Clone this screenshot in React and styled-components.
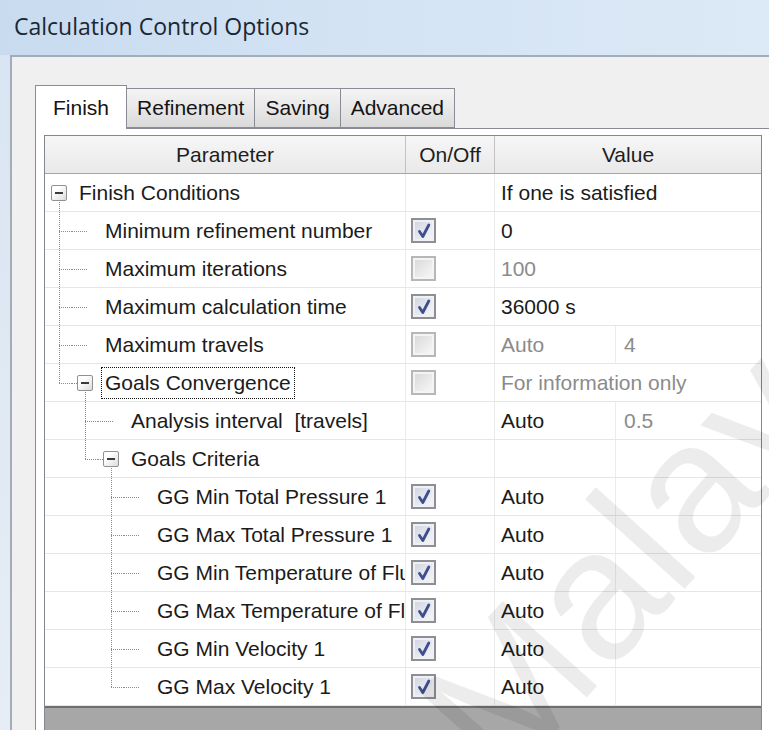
import React from 'react'
import styled, { createGlobalStyle } from 'styled-components'

const GlobalStyle = createGlobalStyle`
  html, body {
    margin: 0;
    padding: 0;
  }
  body {
    width: 769px;
    height: 730px;
    overflow: hidden;
    background: #f0f0f0;
    font-family: "Liberation Sans", Arial, sans-serif;
  }
`

const Window = styled.div`
  position: relative;
  width: 769px;
  height: 730px;
  display: flex;
  flex-direction: column;
  overflow: hidden;
`

const TitleBar = styled.div`
  height: 55px;
  flex: none;
  display: flex;
  align-items: center;
  padding-left: 14px;
  padding-bottom: 3px;
  box-sizing: border-box;
  background: linear-gradient(90deg, #c8dbef 0%, #d3e3f4 45%, #dce9f6 100%);
  font-family: "Open Sans", "Noto Sans", sans-serif;
  font-size: 23px;
  color: #1c2634;
`

const Frame = styled.div`
  flex: 1;
  display: flex;
  padding-left: 10px;
  background: linear-gradient(180deg, #d9e5f2, #e6edf5);
  min-height: 0;
`

const Client = styled.div`
  flex: 1;
  min-width: 0;
  border-top: 2px solid #a3adb9;
  border-left: 2px solid #a3adb9;
  background: #f0f0f0;
  padding: 28px 0 0 23px;
`

const TabStrip = styled.div`
  display: flex;
  align-items: flex-end;
  height: 43px;
  position: relative;
  z-index: 1;
`

const Tab = styled.div`
  box-sizing: border-box;
  height: ${p => (p.$active ? 44 : 40)}px;
  margin-bottom: ${p => (p.$active ? -1 : 0)}px;
  padding: 0 ${p => (p.$active ? 17 : 10)}px;
  margin-left: ${p => (p.$first ? 0 : -1)}px;
  display: flex;
  align-items: center;
  font-size: 21px;
  color: #141414;
  border: 1px solid #898c95;
  border-bottom: ${p => (p.$active ? 'none' : '1px solid #898c95')};
  background: ${p =>
    p.$active ? '#ffffff' : 'linear-gradient(180deg, #f4f4f4 0%, #e8e8e8 50%, #dadada 100%)'};
  position: relative;
  z-index: ${p => (p.$active ? 2 : 1)};
`

const TabPanel = styled.div`
  width: max-content;
  border: 1px solid #898c95;
  background: #ffffff;
  padding: 6px 8px 40px 8px;
`

const ListView = styled.div`
  position: relative;
  width: 718px;
  box-sizing: border-box;
  border: 1px solid #828790;
  background: #ffffff;
  overflow: hidden;
`

const cols = '361px 89px 1fr'

const Header = styled.div`
  display: grid;
  grid-template-columns: ${cols};
  height: 38px;
  box-sizing: border-box;
  border-bottom: 1px solid #a5a5a5;
  background: linear-gradient(180deg, #f6f6f6, #e9e9e9);
`

const HeadCell = styled.div`
  display: flex;
  align-items: center;
  justify-content: center;
  font-size: 21px;
  color: #1e1e1e;
  border-right: 1px solid #c3c3c3;
  &:last-child {
    border-right: none;
  }
`

const Row = styled.div`
  display: grid;
  grid-template-columns: ${cols};
  height: 38px;
  box-sizing: border-box;
  border-bottom: 1px solid #e6e6e6;
`

const ParamCell = styled.div`
  display: flex;
  align-items: stretch;
  padding-left: 1px;
  border-right: 1px solid #ebebeb;
  overflow: hidden;
  white-space: nowrap;
`

const Guide = styled.span`
  position: relative;
  flex: none;
  width: 26px;

  &::before {
    content: '';
    display: ${p => (p.$up || p.$down ? 'block' : 'none')};
    position: absolute;
    left: 13px;
    top: ${p => (p.$up ? '0' : '50%')};
    bottom: ${p => (p.$down ? '0' : '50%')};
    border-left: 1px dotted #8a8a8a;
  }

  &::after {
    content: '';
    display: ${p => (p.$left || p.$right ? 'block' : 'none')};
    position: absolute;
    top: 50%;
    left: ${p => (p.$left ? '0' : '13px')};
    right: ${p => (p.$right ? '0' : '11px')};
    border-top: 1px dotted #8a8a8a;
  }
`

const ExpandBox = styled.span`
  position: absolute;
  z-index: 1;
  left: 5px;
  top: 50%;
  width: 16px;
  height: 16px;
  margin-top: -8px;
  box-sizing: border-box;
  border: 1px solid #919191;
  border-radius: 2px;
  background: linear-gradient(135deg, #ffffff 30%, #dcdcdc 100%);

  &::after {
    content: '';
    position: absolute;
    left: 3px;
    right: 3px;
    top: 6px;
    height: 2px;
    background: #3a3a3a;
  }
`

const Label = styled.span`
  display: flex;
  align-items: center;
  align-self: center;
  height: 32px;
  box-sizing: border-box;
  margin-left: 3px;
  padding: 0 4px;
  font-size: 21px;
  white-space: pre;
  color: #1b1b1b;
  outline: ${p => (p.$focus ? '1px dotted #111' : 'none')};
  outline-offset: -1px;
`

const CheckCell = styled.div`
  display: flex;
  align-items: center;
  padding-left: 5px;
  border-right: 1px solid #ebebeb;
`

const Check = styled.span`
  width: 25px;
  height: 25px;
  box-sizing: border-box;
  display: flex;
  align-items: center;
  justify-content: center;
  border: 2px solid ${p => (p.$on ? '#8d8f93' : '#b7b7b7')};
  background: ${p =>
    p.$on
      ? 'linear-gradient(135deg, #cdd2df 0%, #e9ebf1 60%, #f6f7f9 100%)'
      : 'linear-gradient(135deg, #d6d6d6 0%, #ececec 60%, #f9f9f9 100%)'};
  box-shadow: inset 0 0 0 2px ${p => (p.$on ? '#eef0f5' : '#f4f4f4')};
`

const ValueCell = styled.div`
  display: grid;
  grid-template-columns: 120px 1fr;
`

const Value = styled.span`
  display: flex;
  align-items: center;
  padding-left: ${p => (p.$sub ? 8 : 6)}px;
  font-size: 21px;
  white-space: nowrap;
  color: ${p => (p.$dim ? '#8b8b8b' : '#1b1b1b')};
  border-left: ${p => (p.$sub ? '1px solid #ececec' : 'none')};
`

const EmptyArea = styled.div`
  height: 40px;
  background: #a7a7a7;
  border-top: 2px solid #6f6f6f;
`

// faint diagonal overlay text, rotated about its baseline start
const Watermark = styled.div`
  position: absolute;
  left: 505px;
  top: 633px;
  font-family: "Liberation Sans", Arial, sans-serif;
  font-size: 185px;
  line-height: 1;
  color: rgba(0, 0, 0, 0.075);
  white-space: nowrap;
  transform: rotate(-48deg);
  transform-origin: 0 157px;
  pointer-events: none;
`

const rows = [
  { name: 'Finish Conditions', level: 0, box: true, value: 'If one is satisfied' },
  { name: 'Minimum refinement number', level: 1, check: 'on', value: '0' },
  { name: 'Maximum iterations', level: 1, check: 'off', value: '100', dim: true },
  { name: 'Maximum calculation time', level: 1, check: 'on', value: '36000 s' },
  { name: 'Maximum travels', level: 1, check: 'off', value: 'Auto', extra: '4', dim: true, split: true },
  { name: 'Goals Convergence', level: 1, box: true, check: 'off', value: 'For information only', dim: true, focus: true },
  { name: 'Analysis interval  [travels]', level: 2, value: 'Auto', extra: '0.5', extraDim: true, split: true },
  { name: 'Goals Criteria', level: 2, box: true, split: true },
  { name: 'GG Min Total Pressure 1', level: 3, check: 'on', value: 'Auto', split: true },
  { name: 'GG Max Total Pressure 1', level: 3, check: 'on', value: 'Auto', split: true },
  { name: 'GG Min Temperature of Fluid 1', level: 3, check: 'on', value: 'Auto', split: true },
  { name: 'GG Max Temperature of Fluid 1', level: 3, check: 'on', value: 'Auto', split: true },
  { name: 'GG Min Velocity 1', level: 3, check: 'on', value: 'Auto', split: true },
  { name: 'GG Max Velocity 1', level: 3, check: 'on', value: 'Auto', split: true },
]

// which connector goes in each indent column of a row
const guidesFor = (i) => {
  const r = rows[i]
  const out = []
  for (let j = 0; j < r.level; j++) {
    let more = false
    for (let k = i + 1; k < rows.length; k++) {
      if (rows[k].level <= j) break
      if (rows[k].level === j + 1) {
        more = true
        break
      }
    }
    if (j === r.level - 1) out.push(more ? 'tee' : 'corner')
    else out.push(more ? 'pipe' : 'blank')
  }
  return out
}

const CheckMark = () => (
  <svg width="14" height="16" viewBox="0 0 14 16">
    <path d="M2.5 8.5 L5.8 13.5 L11.8 2" stroke="#3d4f8e" strokeWidth="2.8" fill="none" strokeLinecap="round" strokeLinejoin="round" />
  </svg>
)

const TreeRow = ({ row, idx }) => {
  const guides = guidesFor(idx)
  return (
    <Row>
      <ParamCell>
        {guides.map((g, j) => (
          <Guide
            key={j}
            $up={g !== 'blank'}
            $down={g === 'tee' || g === 'pipe'}
            $right={g === 'tee' || g === 'corner'}
          />
        ))}
        {row.box ? (
          <Guide $down $left={row.level > 0}>
            <ExpandBox />
          </Guide>
        ) : (
          <Guide $left />
        )}
        <Label $focus={row.focus}>{row.name}</Label>
      </ParamCell>
      <CheckCell>
        {row.check && (
          <Check $on={row.check === 'on'}>{row.check === 'on' && <CheckMark />}</Check>
        )}
      </CheckCell>
      <ValueCell>
        <Value $dim={row.dim}>{row.value}</Value>
        {row.split && <Value $sub $dim={row.dim || row.extraDim}>{row.extra}</Value>}
      </ValueCell>
    </Row>
  )
}

const App = () => {
  return (
    <Window>
      <GlobalStyle />
      <TitleBar>Calculation Control Options</TitleBar>
      <Frame>
        <Client>
          <TabStrip>
            <Tab $active $first>Finish</Tab>
            <Tab>Refinement</Tab>
            <Tab>Saving</Tab>
            <Tab>Advanced</Tab>
          </TabStrip>
          <TabPanel>
            <ListView>
              <Header>
                <HeadCell>Parameter</HeadCell>
                <HeadCell>On/Off</HeadCell>
                <HeadCell>Value</HeadCell>
              </Header>
              {rows.map((r, i) => (
                <TreeRow key={r.name} row={r} idx={i} />
              ))}
              <EmptyArea />
            </ListView>
          </TabPanel>
        </Client>
      </Frame>
      <Watermark>Malaya</Watermark>
    </Window>
  )
}

export default App
